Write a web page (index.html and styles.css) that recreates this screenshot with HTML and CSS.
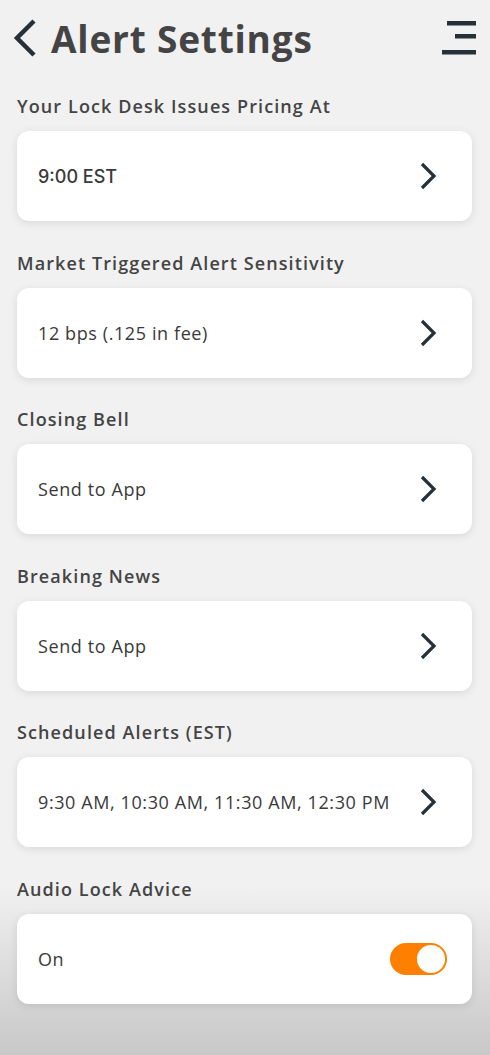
FILE: index.html
```html
<!DOCTYPE html>
<html lang="en">
<head>
    <meta charset="UTF-8">
    <meta name="viewport" content="width=device-width, initial-scale=1.0">
    <title>Alert Settings</title>
    <link rel="stylesheet" href="styles.css">
</head>
<body>
    <div class="page">
        <header class="topbar">
            <div class="title-group">
                <svg class="back" width="26" height="40" viewBox="0 0 26 40">
                    <polyline points="22,3 5,20 22,37" fill="none" stroke="#263039" stroke-width="4.5"/>
                </svg>
                <h1>Alert Settings</h1>
            </div>
            <svg class="menu" width="36" height="36" viewBox="0 0 36 36">
                <rect x="6" y="1" width="29" height="4.5" fill="#263039"/>
                <rect x="14" y="14" width="21" height="4.5" fill="#263039"/>
                <rect x="1" y="30" width="34" height="4.5" fill="#263039"/>
            </svg>
        </header>

        <section class="setting">
            <h2>Your Lock Desk Issues Pricing At</h2>
            <div class="card">
                <span class="value alt">9:00 EST</span>
                <svg class="chev" width="18" height="28" viewBox="0 0 18 28"><polyline points="3,2 15,14 3,26" fill="none" stroke="#263039" stroke-width="3.2"/></svg>
            </div>
        </section>

        <section class="setting">
            <h2>Market Triggered Alert Sensitivity</h2>
            <div class="card">
                <span class="value">12 bps (.125 in fee)</span>
                <svg class="chev" width="18" height="28" viewBox="0 0 18 28"><polyline points="3,2 15,14 3,26" fill="none" stroke="#263039" stroke-width="3.2"/></svg>
            </div>
        </section>

        <section class="setting">
            <h2>Closing Bell</h2>
            <div class="card">
                <span class="value">Send to App</span>
                <svg class="chev" width="18" height="28" viewBox="0 0 18 28"><polyline points="3,2 15,14 3,26" fill="none" stroke="#263039" stroke-width="3.2"/></svg>
            </div>
        </section>

        <section class="setting">
            <h2>Breaking News</h2>
            <div class="card">
                <span class="value">Send to App</span>
                <svg class="chev" width="18" height="28" viewBox="0 0 18 28"><polyline points="3,2 15,14 3,26" fill="none" stroke="#263039" stroke-width="3.2"/></svg>
            </div>
        </section>

        <section class="setting">
            <h2>Scheduled Alerts (EST)</h2>
            <div class="card">
                <span class="value">9:30 AM, 10:30 AM, 11:30 AM, 12:30 PM</span>
                <svg class="chev" width="18" height="28" viewBox="0 0 18 28"><polyline points="3,2 15,14 3,26" fill="none" stroke="#263039" stroke-width="3.2"/></svg>
            </div>
        </section>

        <section class="setting">
            <h2>Audio Lock Advice</h2>
            <div class="card">
                <span class="value">On</span>
                <span class="toggle"><span class="knob"></span></span>
            </div>
        </section>
    </div>
</body>
</html>
```

FILE: styles.css
```css
body {
    margin: 0;
    font-family: "Open Sans", sans-serif;
    color: #444;
    background: linear-gradient(to bottom, #f1f1f1 0, #f1f1f1 885px, #c8c8c8 1055px);
    min-height: 1055px;
}
.page {
    padding: 0 18px 0 17px;
}
.topbar {
    display: flex;
    justify-content: space-between;
    align-items: center;
    height: 76px;
}
.title-group {
    display: flex;
    align-items: center;
    gap: 13px;
    margin-left: -5px;
}
.back {
    display: block;
}
h1 {
    margin: 0;
    font-size: 37px;
    font-weight: 700;
    color: #444;
    letter-spacing: 0.8px;
}
.menu {
    display: block;
    margin-right: -5px;
}
h2 {
    margin: 0;
    padding: 29.5px 0 13px;
    font-size: 18px;
    font-weight: 600;
    color: #444;
    line-height: 24px;
    letter-spacing: 1.1px;
}
.setting:first-of-type h2 {
    padding-top: 18px;
}
.card {
    background: #fff;
    border-radius: 12px;
    height: 90px;
    box-shadow: 0 2px 8px rgba(0, 0, 0, 0.1);
    display: flex;
    align-items: center;
    justify-content: space-between;
    padding: 0 35px 0 21px;
    box-sizing: border-box;
}
.value {
    font-size: 18px;
    color: #3a3a3a;
    letter-spacing: 0.6px;
}
.value.alt {
    font-family: Inter, sans-serif;
    font-weight: 500;
    letter-spacing: 0;
}
.chev {
    display: block;
}
.toggle {
    width: 57px;
    height: 32px;
    border-radius: 16px;
    background: #ff7f00;
    display: flex;
    align-items: center;
    justify-content: flex-end;
    padding: 2px;
    box-sizing: border-box;
    margin-right: -10px;
}
.knob {
    width: 28px;
    height: 28px;
    border-radius: 50%;
    background: #fff;
}
```
